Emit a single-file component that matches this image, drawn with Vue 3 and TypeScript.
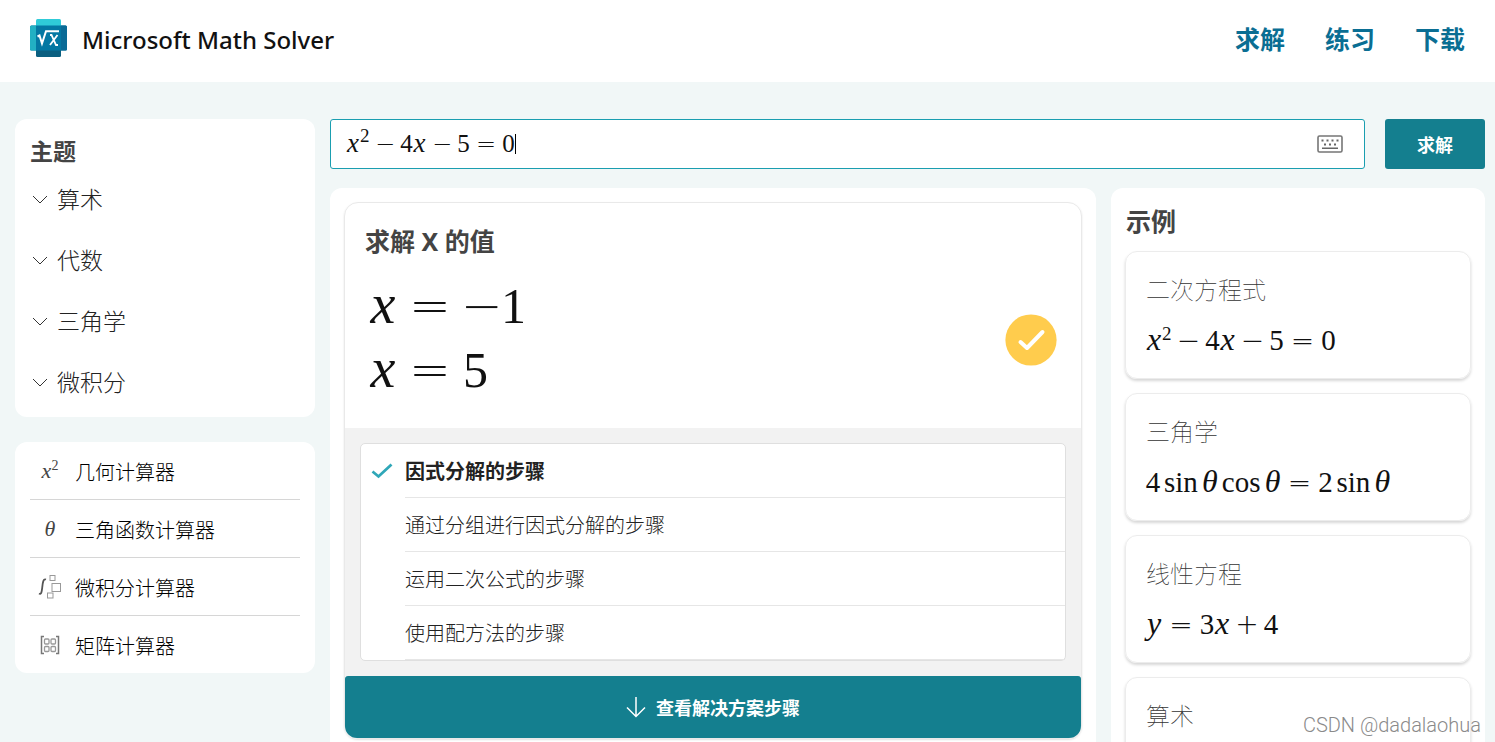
<script setup lang="ts">
import { ref } from 'vue'

type Kind = 'v' | 'n' | 'sup' | 'bin' | 'rel' | 'neg' | 'fn'
interface Token { k: Kind; t: string }
const tk = (k: Kind, t: string): Token => ({ k, t })

const quadratic: Token[] = [
  tk('v', 'x'), tk('sup', '2'), tk('bin', '−'), tk('n', '4'), tk('v', 'x'),
  tk('bin', '−'), tk('n', '5'), tk('rel', '='), tk('n', '0'),
]
const solutions: Token[][] = [
  [tk('v', 'x'), tk('rel', '='), tk('neg', '−'), tk('n', '1')],
  [tk('v', 'x'), tk('rel', '='), tk('n', '5')],
]
const examples: { title: string; math: Token[] }[] = [
  { title: '二次方程式', math: quadratic },
  {
    title: '三角学',
    math: [
      tk('n', '4'), tk('fn', 'sin'), tk('v', 'θ'), tk('fn', 'cos'), tk('v', 'θ'),
      tk('rel', '='), tk('n', '2'), tk('fn', 'sin'), tk('v', 'θ'),
    ],
  },
  { title: '线性方程', math: [tk('v', 'y'), tk('rel', '='), tk('n', '3'), tk('v', 'x'), tk('bin', '+'), tk('n', '4')] },
  { title: '算术', math: [] },
]
const topics = ['算术', '代数', '三角学', '微积分']
const calculators = [
  { icon: 'power', name: '几何计算器' },
  { icon: 'theta', name: '三角函数计算器' },
  { icon: 'integral', name: '微积分计算器' },
  { icon: 'matrix', name: '矩阵计算器' },
]
const methods = ['因式分解的步骤', '通过分组进行因式分解的步骤', '运用二次公式的步骤', '使用配方法的步骤']
const selected = ref(0)
const entry = ref('')
</script>

<template>
  <div class="page">
    <header class="header">
      <a class="brand" href="#">
        <svg class="logo" viewBox="0 0 37 38" aria-hidden="true">
          <rect x="6" y="0" width="25" height="20" rx="1.5" fill="#2fcbd8" />
          <rect x="6" y="20" width="25" height="18" rx="1.5" fill="#0b5f80" />
          <rect x="0" y="6.500" width="37" height="25" rx="1.500" fill="#0478a3" />
          <path d="M1.500 6.500H6V31.500H1.500Q0 31.500 0 30V8Q0 6.500 1.500 6.500Z" fill="#22b0c3" />
          <path d="M31 6.500H35.500Q37 6.500 37 8V30Q37 31.500 35.500 31.500H31Z" fill="#0a6a96" />
          <path d="M7.500 17.500L9.500 16.500L12 24.500L16 12.300H29" fill="none" stroke="#fff" stroke-width="2" />
          <path d="M20 16H21.500L26 26H28M27.500 16L20 26" fill="none" stroke="#fff" stroke-width="1.800" />
        </svg>
        <span class="brand-name">Microsoft Math Solver</span>
      </a>
      <nav class="nav">
        <a href="#solve">求解</a>
        <a href="#practice">练习</a>
        <a href="#download">下载</a>
      </nav>
    </header>

    <div class="body">
      <aside class="side">
        <section class="panel topics">
          <h2 class="topics-title">主题</h2>
          <button v-for="t in topics" :key="t" class="topic" type="button">
            <svg class="chevron" viewBox="0 0 16 9" aria-hidden="true">
              <path d="M1 1L8 8L15 1" fill="none" stroke="#333" stroke-width="1" />
            </svg>
            <span class="topic-name">{{ t }}</span>
          </button>
        </section>
        <section class="panel calcs">
          <a v-for="c in calculators" :key="c.name" class="calc" href="#">
            <span class="calc-icon">
              <span v-if="c.icon === 'power'" class="glyph"><i>x</i><sup>2</sup></span>
              <span v-else-if="c.icon === 'theta'" class="glyph"><i>θ</i></span>
              <svg v-else-if="c.icon === 'integral'" width="24" height="26" viewBox="0 0 24 26" fill="none" aria-hidden="true">
                <path d="M1 19.500C3.500 21 3.800 17 4.300 13C4.800 8.500 5.200 4.500 8 5.500" stroke="#555" stroke-width="1.800" />
                <rect x="12" y="1.500" width="5" height="5" stroke="#999" />
                <rect x="14" y="9.500" width="8.500" height="8" stroke="#999" />
                <rect x="9.500" y="19" width="5.500" height="5" stroke="#999" />
              </svg>
              <svg v-else width="20" height="20" viewBox="0 0 20 20" fill="none" aria-hidden="true">
                <path d="M4 1.500H1.500V18.500H4M16 1.500H18.500V18.500H16" stroke="#777" stroke-width="1.500" />
                <g stroke="#999" stroke-width="1.300">
                  <rect x="4.500" y="4" width="4.500" height="5" rx="1" />
                  <rect x="11" y="4" width="4.500" height="5" rx="1" />
                  <rect x="4.500" y="11.500" width="4.500" height="5" rx="1" />
                  <rect x="11" y="11.500" width="4.500" height="5" rx="1" />
                </g>
              </svg>
            </span>
            <span>{{ c.name }}</span>
          </a>
        </section>
      </aside>

      <main class="main">
        <form class="search" @submit.prevent>
          <label class="field">
            <span class="math math-m"><span v-for="(m, i) in quadratic" :key="i" :class="m.k">{{ m.t }}</span></span>
            <span class="caret"></span>
            <input v-model="entry" class="entry" type="text" aria-label="输入数学问题" />
            <svg class="keyboard" viewBox="0 0 26 18" aria-hidden="true">
              <rect x="1" y="1" width="24" height="16" rx="1.500" fill="none" stroke="#767676" stroke-width="1.600" />
              <g fill="#666">
                <rect x="4.500" y="4.500" width="2" height="2" /><rect x="9.500" y="4.500" width="2" height="2" />
                <rect x="14.500" y="4.500" width="2" height="2" /><rect x="19.500" y="4.500" width="2" height="2" />
                <rect x="7" y="8.500" width="2" height="2" /><rect x="12" y="8.500" width="2" height="2" />
                <rect x="17" y="8.500" width="2" height="2" /><rect x="5" y="12.500" width="16" height="1.500" />
              </g>
            </svg>
          </label>
          <button class="solve" type="submit">求解</button>
        </form>

        <div class="columns">
          <section class="panel result-panel">
            <article class="result">
              <div class="answer">
                <h2 class="answer-title">求解 X 的值</h2>
                <div class="answer-row">
                  <div class="answer-lines">
                    <div v-for="(s, j) in solutions" :key="j" class="math math-l"><span v-for="(m, i) in s" :key="i" :class="m.k">{{ m.t }}</span></div>
                  </div>
                  <svg class="badge" viewBox="0 0 52 52" aria-hidden="true">
                    <circle cx="26" cy="26" r="25.600" fill="#ffcc4d" />
                    <path d="M15.500 28L22 34L37.500 18" fill="none" stroke="#fff" stroke-width="4" stroke-linecap="round" stroke-linejoin="round" />
                  </svg>
                </div>
              </div>
              <div class="methods">
                <div class="method-box">
                  <button
                    v-for="(m, i) in methods" :key="m" type="button" class="method"
                    :class="{ active: i === selected }" @click="selected = i"
                  >
                    <span class="tick">
                      <svg v-if="i === selected" width="22" height="16" viewBox="0 0 22 16" aria-hidden="true">
                        <path d="M1.500 8.500L7.500 13.500L20.500 1.500" fill="none" stroke="#2fa7b8" stroke-width="2.800" />
                      </svg>
                    </span>
                    <span class="method-name">{{ m }}</span>
                  </button>
                </div>
              </div>
              <button class="view" type="button">
                <svg width="20" height="22" viewBox="0 0 20 22" aria-hidden="true">
                  <path d="M10 1V20.500M1 11.500L10 20.500L19 11.500" fill="none" stroke="#fff" stroke-width="1.500" />
                </svg>
                <span>查看解决方案步骤</span>
              </button>
            </article>
          </section>

          <section class="panel examples">
            <h2 class="examples-title">示例</h2>
            <a v-for="e in examples" :key="e.title" class="example" href="#">
              <span class="example-title">{{ e.title }}</span>
              <span class="math math-s"><span v-for="(m, i) in e.math" :key="i" :class="m.k">{{ m.t }}</span></span>
            </a>
          </section>
        </div>
      </main>
    </div>
    <div class="watermark">CSDN @dadalaohua</div>
  </div>
</template>

<style>
body { margin: 0; }
</style>

<style scoped>
.page {
  position: relative;
  display: flex;
  flex-direction: column;
  height: 100vh;
  overflow: hidden;
  background: #f1f7f7;
  color: #333;
  font-family: "Noto Sans", "Noto Sans CJK SC", sans-serif;
}
.page * { box-sizing: border-box; }
h2 { margin: 0; }
a { color: inherit; text-decoration: none; }
button { font-family: inherit; border: 0; cursor: pointer; }
.header {
  display: flex;
  flex: none;
  align-items: center;
  justify-content: space-between;
  height: 82px;
  padding: 0 30px 6px;
  background: #fff;
}
.brand { display: flex; align-items: center; gap: 15px; }
.logo { width: 37px; height: 38px; }
.brand-name { padding-top: 3px; color: #111; font: 500 24px/38px "Noto Sans", sans-serif; }
.nav { display: flex; gap: 40px; padding-top: 2px; color: #0a6e93; font-size: 25px; font-weight: 700; line-height: 38px; }

.body {
  display: grid;
  flex: 1;
  grid-template-columns: 300px 1fr;
  gap: 15px;
  min-height: 0;
  padding: 37px 10px 0 15px;
}
.panel { background: #fff; border-radius: 12px; }
.side { display: flex; flex-direction: column; gap: 25px; }
.topics { padding: 15px 15px 4px; }
.topics-title { color: #444; font-size: 23px; line-height: 35px; }
.topic {
  display: flex;
  align-items: center;
  gap: 9px;
  width: 100%;
  height: 61px;
  padding: 0 2px;
  background: none;
  color: #222;
  font-size: 23px;
  font-weight: 300;
}
.topic-name { padding-bottom: 4px; }
.chevron { width: 16px; height: 9px; }
.calcs { padding: 0 15px; }
.calc {
  display: flex;
  align-items: center;
  gap: 10px;
  height: 58px;
  padding-top: 2px;
  border-bottom: 1px solid #d6d6d6;
  color: #000;
  font-size: 20px;
  font-weight: 300;
}
.calc:last-child { height: 57px; border-bottom: 0; }
.calc-icon { display: flex; align-items: center; justify-content: center; width: 35px; padding: 0 0 2px 5px; }
.glyph { color: #444; font: 22px/24px "Liberation Serif", serif; }
.glyph sup { font-size: 14px; line-height: 0; }

.main { display: flex; flex-direction: column; gap: 19px; min-width: 0; min-height: 0; }
.search { display: flex; gap: 20px; }
.field {
  display: flex;
  flex: 1;
  align-items: center;
  height: 50px;
  padding: 0 21px 0 15px;
  background: #fff;
  border: 1px solid #1a9eb0;
  border-radius: 3px;
}
.entry { flex: 1; min-width: 0; height: 40px; padding: 0; border: 0; outline: 0; background: none; font: 25px "Liberation Serif", serif; }
.caret { width: 1px; height: 20px; background: #000; }
.keyboard { width: 26px; height: 18px; }
.solve { width: 100px; height: 50px; background: #147f8f; border-radius: 3px; color: #fff; font-size: 18px; font-weight: 700; }

.columns { display: grid; flex: 1; grid-template-columns: 1fr 374px; gap: 15px; min-height: 0; }
.result-panel { min-width: 0; padding: 14px; }
.result { border: 1px solid #e9e9e9; border-radius: 14px; box-shadow: 0 1px 2px rgba(0, 0, 0, 0.12); }
.answer { padding: 20px 24px 22px 20px; }
.answer-title { color: #444; font-size: 25px; line-height: 36px; }
.answer-row { display: flex; justify-content: space-between; align-items: center; height: 133px; margin-top: 14px; padding-left: 4px; }
.answer-lines { padding-bottom: 4px; }
.badge { width: 52px; height: 52px; }
.methods { padding: 15px; background: #f2f2f2; }
.method-box { background: #fff; border: 1px solid #dfdfdf; border-radius: 5px; }
.method { display: flex; width: 100%; height: 54px; padding: 0; background: none; color: #222; font-size: 20px; font-weight: 300; text-align: left; }
.tick { display: flex; align-items: center; width: 44px; padding-left: 10px; }
.method-name { flex: 1; border-bottom: 1px solid #e6e6e6; line-height: 55px; }
.active { font-weight: 700; }
.view {
  display: flex;
  align-items: center;
  justify-content: center;
  gap: 10px;
  width: 100%;
  height: 62px;
  background: #147f8f;
  border-radius: 3px 3px 12px 12px;
  color: #fff;
  font-size: 18px;
  font-weight: 700;
}

.examples { padding: 15px 14px 0; }
.examples-title { padding-left: 1px; color: #444; font-size: 25px; line-height: 36px; margin-bottom: 12px; }
.example {
  display: block;
  height: 128px;
  margin-bottom: 14px;
  padding: 20px;
  border: 1px solid #ececec;
  border-radius: 12px;
  box-shadow: 0 2px 3px rgba(0, 0, 0, 0.16);
}
.example-title { display: block; color: #333; font-size: 24px; font-weight: 100; line-height: 36px; margin-bottom: 14px; }

.math {
  --var: 16px;
  --var-size: 32px;
  --num: 14px;
  --op: 22px;
  --op-size: 28px;
  --fn-gap: 4px;
  --bin: 6px;
  --rel: 8px;
  display: flex;
  align-items: baseline;
  color: #111;
  font-family: "Liberation Serif", serif;
}
.math-s { font-size: 29px; line-height: 36px; }
.math-m { --var: 14px; --var-size: 27px; --num: 12px; --op: 19px; --op-size: 24px; --rel: 7px; font-size: 25px; line-height: 48px; }
.math-l { --var: 28px; --var-size: 56px; --num: 25px; --op: 38px; --op-size: 50px; --rel: 14px; font-size: 50px; line-height: 64px; }
.math > span { flex: none; }
.v { display: flex; justify-content: center; width: var(--var); font-size: var(--var-size); font-style: italic; line-height: 1; }
.n { display: flex; justify-content: center; width: var(--num); }
.bin, .rel, .neg {
  display: flex;
  justify-content: center;
  width: var(--op);
  font-family: "DejaVu Sans Light", "DejaVu Sans", sans-serif;
  font-size: var(--op-size);
  font-weight: 200;
  line-height: 1;
}
.bin { margin: 0 var(--bin); }
.rel { margin: 0 var(--rel); }
.fn { margin: 0 var(--fn-gap); }
.sup { position: relative; top: -10px; font-size: 19px; line-height: 20px; }

.watermark {
  position: absolute;
  right: 14px;
  bottom: 4px;
  color: #8a8a8a;
  font: 300 20px/26px Roboto, Arial, sans-serif;
  text-shadow: 1px 1px 0 #fff;
}
</style>
